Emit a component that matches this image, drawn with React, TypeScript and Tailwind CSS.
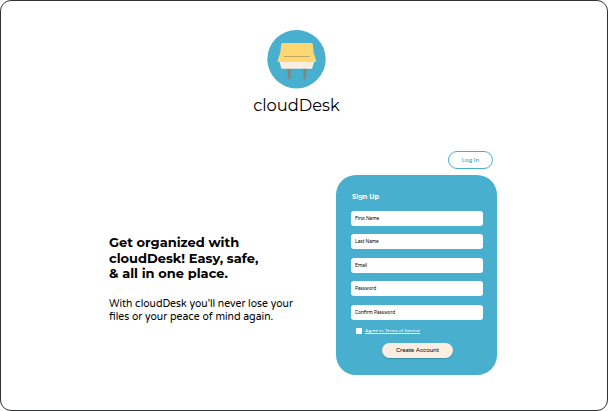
const fields = ['First Name', 'Last Name', 'Email', 'Password', 'Confirm Password'];

function Logo() {
  return (
    <svg className="block h-[59px] w-[59px] shrink-0" viewBox="0 0 59 59">
      <circle cx="29.500" cy="29.200" r="29.200" fill="#48b0ce" />
      <path d="M20.400 37h3.600l-.7 12.300h-2.200zM36 37h3.600l-.7 12.300h-2.200z" fill="#85857f" />
      <path d="M12.300 31h35l-2.200 7.700H14.500z" fill="#faede1" />
      <path d="M15.300 12.900h29.400q.9 0 1 .9l.9 8.100 2.500 8.900q.3 1.200-.8 1.200H11.400q-1.100 0-.8-1.200l2.800-8.900.9-8.100q.1-.9 1-.9z" fill="#fed672" />
      <path d="M17.400 26.500h24.800" stroke="#bfa462" strokeWidth="1.200" strokeLinecap="round" />
    </svg>
  );
}

export default function App() {
  return (
    <div className="h-[411px] w-[608px] overflow-hidden bg-white">
      <main className="flex h-full flex-col rounded-[11px] border border-[#303234] bg-white font-['Montserrat',Inter,sans-serif] text-black">
        <header className="flex h-[114px] flex-col items-center pr-[15px] pt-[29px]">
          <Logo />
          <h1 className="mt-[5px] whitespace-nowrap text-[16.300px] font-normal leading-[23px]">cloudDesk</h1>
        </header>
        <div className="flex pl-[108px] pt-[36px]">
          <section className="w-[227px] whitespace-nowrap pt-[84px]">
            <h2 className="text-[13px] font-bold leading-[15.700px]">
              <span className="block">Get organized with</span>
              <span className="block">cloudDesk! Easy, safe,</span>
              <span className="block">&amp; all in one place.</span>
            </h2>
            <p className="mt-[16px] font-['Varela_Round','Montserrat',Inter,sans-serif] text-[10.450px] leading-[12.800px]">
              <span className="block">With cloudDesk you’ll never lose your</span>
              <span className="block">files or your peace of mind again.</span>
            </p>
          </section>
          <div className="flex w-[161px] flex-col">
            <button className="mr-1 flex h-[18px] w-[45px] items-center justify-center self-end rounded-full border border-[#48b0ce] pt-px text-[5.500px] font-semibold leading-none text-[#48b0ce]">Log In</button>
            <form className="mt-[6px] flex h-[200px] flex-col rounded-[20px] bg-[#48b0ce] pl-[15px] pr-[14px] pt-[17px]">
              <h3 className="h-[18.500px] pl-px text-[6.600px] font-bold leading-[10px] text-white">Sign Up</h3>
              <div className="flex flex-col gap-[8.500px] font-['Varela_Round','Montserrat',Inter,sans-serif]">
                {fields.map((field) => (
                  <div key={field} className="flex h-[15px] items-center rounded-[3px] bg-white pl-1 pt-[2px] text-[4.650px] leading-none text-black">
                    <span>{field}</span>
                  </div>
                ))}
              </div>
              <label className="mt-[7.500px] flex h-[7px] items-center gap-[3px] pl-[5px] font-['Varela_Round','Montserrat',Inter,sans-serif] text-[4.500px] leading-none text-white">
                <span className="h-[6px] w-[6px] bg-white" />
                <span className="pt-px underline decoration-[0.500px]">Agree to Terms of Service</span>
              </label>
              <button className="ml-[31px] mt-[9px] h-[15px] w-[71px] rounded-full bg-[#faede1] font-['Varela_Round','Montserrat',Inter,sans-serif] text-[5.850px] leading-none text-black shadow-[0_1px_1px_#28728888]">Create Account</button>
            </form>
          </div>
        </div>
      </main>
    </div>
  );
}
